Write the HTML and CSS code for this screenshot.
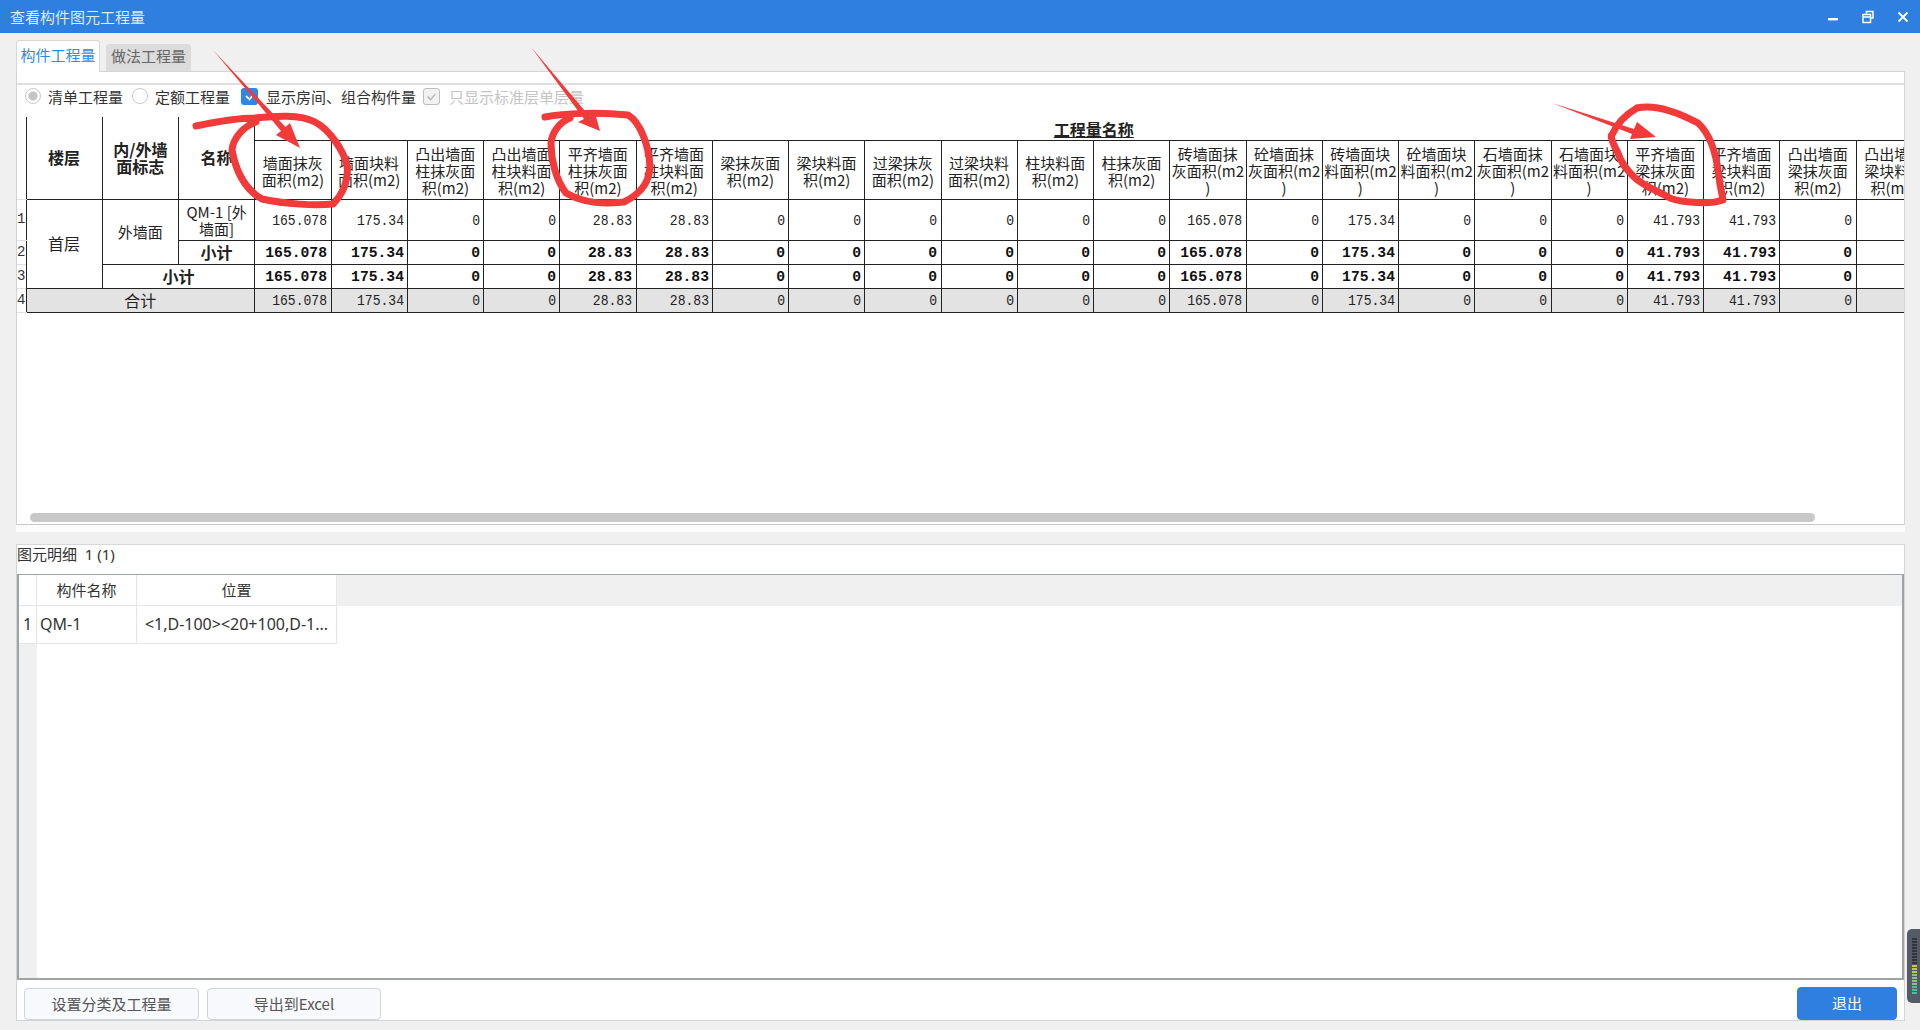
FILE: index.html
```html
<!DOCTYPE html>
<html lang="zh-CN">
<head>
<meta charset="utf-8">
<title>查看构件图元工程量</title>
<link rel="stylesheet" href="styles.css">
</head>
<body>
<header class="titlebar">
  <span class="title">查看构件图元工程量</span>
  <div class="winctl">
    <svg class="ico" viewBox="0 0 14 14"><rect x="2" y="8" width="10" height="2.4" fill="#fff"/></svg>
    <svg class="ico" viewBox="0 0 14 14"><path d="M5.5 3.5V1.5h6.5v6.5h-2.5M2 4.5h7.5v8H2zM2 7h7.5" fill="none" stroke="#fff" stroke-width="1.5"/></svg>
    <svg class="ico" viewBox="0 0 14 14"><path d="M2.5 2.5l9 9M11.5 2.5l-9 9" fill="none" stroke="#fff" stroke-width="1.8"/></svg>
  </div>
</header>

<div class="tabs">
  <div class="tab active">构件工程量</div>
  <div class="tab">做法工程量</div>
</div>

<main class="panel">
  <section class="upper">
    <div class="options">
      <label class="opt r1"><span class="radio"></span>清单工程量</label>
      <label class="opt r2"><span class="radio"></span>定额工程量</label>
      <label class="opt r3"><span class="check on"><svg viewBox="0 0 17 17"><path d="M5 8l3.5 3.5L12 7" fill="none" stroke="#fff" stroke-width="1.8"/></svg></span>显示房间、组合构件量</label>
      <label class="opt disabled"><span class="check off"><svg viewBox="0 0 17 17"><path d="M4 8.5l3.5 3.5L13 5.5" fill="none" stroke="#b5b5b5" stroke-width="1.6"/></svg></span>只显示标准层单层量</label>
    </div>
    <div class="grid-wrap">
      <table class="qty">
        <colgroup>
          <col class="c-no">
          <col class="c"><col class="c"><col class="c">
          <col class="c"><col class="c"><col class="c"><col class="c"><col class="c"><col class="c"><col class="c"><col class="c"><col class="c"><col class="c"><col class="c"><col class="c"><col class="c"><col class="c"><col class="c"><col class="c"><col class="c"><col class="c"><col class="c"><col class="c"><col class="c"><col class="c">
        </colgroup>
        <thead>
          <tr class="h1">
            <th class="no" rowspan="2"></th>
            <th class="lab" rowspan="2">楼层</th>
            <th class="lab" rowspan="2">内/外墙<br>面标志</th>
            <th class="lab" rowspan="2">名称</th>
            <th class="group" colspan="22">工程量名称</th>
          </tr>
          <tr class="h2">
            <th>墙面抹灰<br>面积(m2)</th>
            <th>墙面块料<br>面积(m2)</th>
            <th>凸出墙面<br>柱抹灰面<br>积(m2)</th>
            <th>凸出墙面<br>柱块料面<br>积(m2)</th>
            <th>平齐墙面<br>柱抹灰面<br>积(m2)</th>
            <th>平齐墙面<br>柱块料面<br>积(m2)</th>
            <th>梁抹灰面<br>积(m2)</th>
            <th>梁块料面<br>积(m2)</th>
            <th>过梁抹灰<br>面积(m2)</th>
            <th>过梁块料<br>面积(m2)</th>
            <th>柱块料面<br>积(m2)</th>
            <th>柱抹灰面<br>积(m2)</th>
            <th>砖墙面抹<br>灰面积(m2<br>)</th>
            <th>砼墙面抹<br>灰面积(m2<br>)</th>
            <th>砖墙面块<br>料面积(m2<br>)</th>
            <th>砼墙面块<br>料面积(m2<br>)</th>
            <th>石墙面抹<br>灰面积(m2<br>)</th>
            <th>石墙面块<br>料面积(m2<br>)</th>
            <th>平齐墙面<br>梁抹灰面<br>积(m2)</th>
            <th>平齐墙面<br>梁块料面<br>积(m2)</th>
            <th>凸出墙面<br>梁抹灰面<br>积(m2)</th>
            <th>凸出墙面<br>梁块料面<br>积(m2)</th>
          </tr>
        </thead>
        <tbody>
          <tr class="r-a">
            <td class="no">1</td>
            <td class="txt big" rowspan="3">首层</td>
            <td class="txt" rowspan="2">外墙面</td>
            <td class="txt">QM-1 [外<br>墙面]</td>
            <td class="n"><span>165.078</span></td><td class="n"><span>175.34</span></td><td class="n"><span>0</span></td><td class="n"><span>0</span></td><td class="n"><span>28.83</span></td><td class="n"><span>28.83</span></td><td class="n"><span>0</span></td><td class="n"><span>0</span></td><td class="n"><span>0</span></td><td class="n"><span>0</span></td><td class="n"><span>0</span></td><td class="n"><span>0</span></td><td class="n"><span>165.078</span></td><td class="n"><span>0</span></td><td class="n"><span>175.34</span></td><td class="n"><span>0</span></td><td class="n"><span>0</span></td><td class="n"><span>0</span></td><td class="n"><span>41.793</span></td><td class="n"><span>41.793</span></td><td class="n"><span>0</span></td><td class="n"></td>
          </tr>
          <tr class="r-b strong">
            <td class="no">2</td>
            <td class="txt big">小计</td>
            <td class="n"><span>165.078</span></td><td class="n"><span>175.34</span></td><td class="n"><span>0</span></td><td class="n"><span>0</span></td><td class="n"><span>28.83</span></td><td class="n"><span>28.83</span></td><td class="n"><span>0</span></td><td class="n"><span>0</span></td><td class="n"><span>0</span></td><td class="n"><span>0</span></td><td class="n"><span>0</span></td><td class="n"><span>0</span></td><td class="n"><span>165.078</span></td><td class="n"><span>0</span></td><td class="n"><span>175.34</span></td><td class="n"><span>0</span></td><td class="n"><span>0</span></td><td class="n"><span>0</span></td><td class="n"><span>41.793</span></td><td class="n"><span>41.793</span></td><td class="n"><span>0</span></td><td class="n"></td>
          </tr>
          <tr class="r-b strong">
            <td class="no">3</td>
            <td class="txt big" colspan="2">小计</td>
            <td class="n"><span>165.078</span></td><td class="n"><span>175.34</span></td><td class="n"><span>0</span></td><td class="n"><span>0</span></td><td class="n"><span>28.83</span></td><td class="n"><span>28.83</span></td><td class="n"><span>0</span></td><td class="n"><span>0</span></td><td class="n"><span>0</span></td><td class="n"><span>0</span></td><td class="n"><span>0</span></td><td class="n"><span>0</span></td><td class="n"><span>165.078</span></td><td class="n"><span>0</span></td><td class="n"><span>175.34</span></td><td class="n"><span>0</span></td><td class="n"><span>0</span></td><td class="n"><span>0</span></td><td class="n"><span>41.793</span></td><td class="n"><span>41.793</span></td><td class="n"><span>0</span></td><td class="n"></td>
          </tr>
          <tr class="r-b total">
            <td class="no">4</td>
            <td class="txt big" colspan="3">合计</td>
            <td class="n"><span>165.078</span></td><td class="n"><span>175.34</span></td><td class="n"><span>0</span></td><td class="n"><span>0</span></td><td class="n"><span>28.83</span></td><td class="n"><span>28.83</span></td><td class="n"><span>0</span></td><td class="n"><span>0</span></td><td class="n"><span>0</span></td><td class="n"><span>0</span></td><td class="n"><span>0</span></td><td class="n"><span>0</span></td><td class="n"><span>165.078</span></td><td class="n"><span>0</span></td><td class="n"><span>175.34</span></td><td class="n"><span>0</span></td><td class="n"><span>0</span></td><td class="n"><span>0</span></td><td class="n"><span>41.793</span></td><td class="n"><span>41.793</span></td><td class="n"><span>0</span></td><td class="n"></td>
          </tr>
        </tbody>
      </table>
    </div>
    <div class="hscroll"><div class="thumb"></div></div>
  </section>

  <div class="splitter"></div>

  <section class="lower">
    <div class="caption">图元明细&nbsp;&nbsp;1 (1)</div>
    <div class="detail">
      <div class="d-row d-head">
        <div class="d-no"></div>
        <div class="d-name">构件名称</div>
        <div class="d-pos">位置</div>
      </div>
      <div class="d-row d-item">
        <div class="d-no">1</div>
        <div class="d-name left">QM-1</div>
        <div class="d-pos">&lt;1,D-100&gt;&lt;20+100,D-1...</div>
      </div>
      <div class="d-fill"><div class="d-gutter"></div></div>
    </div>
    <footer class="actions">
      <button class="btn wide">设置分类及工程量</button>
      <button class="btn wide">导出到Excel</button>
      <button class="btn primary">退出</button>
    </footer>
  </section>
</main>

<div class="gadget"><div class="leds"></div></div>

<svg class="marks" viewBox="0 0 1920 1030" width="1920" height="1030">
  <g fill="#f23a3a">
    <polygon points="213,50 285.5,127 290,123 300,148 276,135 281,131"/>
    <polygon points="531,47 590,117 595,113 600,131 578,122 584,119"/>
    <polygon points="1552,103 1634,129 1637,122 1656,137 1630,139 1632,134"/>
  </g>
  <g fill="none" stroke="#f23a3a" stroke-width="7" stroke-linecap="round" stroke-linejoin="round">
    <path d="M196 126C215 122 235 118 255 118C275 116 300 114 315 122C330 130 343 150 347 165C349 180 343 194 333 204C315 206 285 204 262 199C246 190 236 172 232 150C233 138 244 126 256 122"/>
    <path d="M545 117C565 113 600 112 628 115C640 122 649 145 650 167C649 180 644 192 624 202C605 204 585 204 566 193C556 180 551 160 551 143C552 132 560 122 570 118"/>
    <path d="M1637 108C1650 105 1670 108 1698 123C1708 132 1716 150 1719 177C1720 187 1722 193 1723 200C1712 204 1700 203 1690 202C1680 201 1672 200 1668 197C1655 190 1642 185 1634 177C1625 168 1620 160 1618 153C1612 142 1610 135 1612 135C1616 125 1625 115 1637 108"/>
  </g>
</svg>
</body>
</html>
```

FILE: styles.css
```css
* { box-sizing: border-box; }
html, body { margin: 0; height: 100%; }
body {
  width: 1920px;
  height: 1030px;
  overflow: hidden;
  position: relative;
  background: #f0f0f0;
  font-family: "Noto Sans CJK SC", "Noto Sans", sans-serif;
  font-size: 15px;
  color: #333;
  display: flex;
  flex-direction: column;
}

/* title bar */
.titlebar {
  height: 33px;
  flex: none;
  background: #2e7fe0;
  color: #dcebfb;
  display: flex;
  align-items: center;
  justify-content: space-between;
  padding: 0 10px;
}
.winctl { display: flex; gap: 21px; align-items: center; }
.ico { width: 14px; height: 14px; display: block; }

/* tabs */
.tabs {
  height: 38px;
  flex: none;
  padding: 6px 0 0 16px;
  display: flex;
  align-items: flex-end;
  gap: 6px;
}
.tab {
  width: 85px;
  height: 27px;
  background: #dcdcdc;
  color: #666;
  text-align: center;
  line-height: 23px;
  border-radius: 3px 3px 0 0;
}
.tab.active {
  width: 84px;
  height: 32px;
  line-height: 28px;
  background: #fff;
  color: #2e8be8;
  border: 1px solid #d8d8d8;
  border-bottom: 0;
  margin-bottom: -1px;
  position: relative;
  z-index: 1;
}

/* main panel */
.panel {
  margin: 0 15px 0 16px;
  height: 950px;
  flex: none;
  display: flex;
  flex-direction: column;
  border: 1px solid #d4d4d4;
  padding-top: 11px;
  background: #fff;
}
.upper {
  height: 442px;
  flex: none;
  display: flex;
  flex-direction: column;
  background: #fff;
  border-top: 2px solid #dedede;
  border-bottom: 1px solid #c8c8c8;
}
.options {
  height: 32px;
  flex: none;
  display: flex;
  align-items: center;
  padding: 0 0 10px 8px;
}
.opt { display: flex; align-items: center; gap: 7px; color: #333; }
.opt.r1 { margin-right: 9px; }
.opt.r2 { margin-right: 11px; }
.opt.r3 { margin-right: 7px; gap: 8px; }
.opt.disabled { color: #c4c4c4; gap: 9px; }
.radio {
  width: 16px;
  height: 16px;
  border: 1px solid #c8c8c8;
  border-radius: 50%;
  background: #fff;
}
.r1 .radio { background: radial-gradient(circle, #c4c4c4 0 4px, #fff 5px); }
.check { width: 17px; height: 17px; border-radius: 3px; display: block; }
.check svg { display: block; width: 100%; height: 100%; }
.check.on { background: #2e86e6; }
.check.off { background: #f2f2f2; border: 1px solid #bdbdbd; }

.grid-wrap {
  height: 396px;
  flex: none;
  overflow: hidden;
}
.qty {
  table-layout: fixed;
  border-collapse: collapse;
  width: 1915.25px;
  color: #222;
  font-size: 15px;
  line-height: 17px;
}
.c-no { width: 9px; }
.c { width: 76.25px; }
.qty th, .qty td {
  padding: 0;
  overflow: hidden;
  white-space: nowrap;
  border: 1px solid #222;
}
.qty th { font-weight: 400; text-align: center; background: #fff; }
.h1 { height: 23px; }
.h2 { height: 59px; }
.h2 th { padding-top: 2px; }
.r-a { height: 41px; }
.r-b { height: 24px; }
.r-b .txt { padding-top: 1px; }
.qty .lab { font-weight: 700; font-size: 16px; border-top: 0; }
.qty .group {
  font-weight: 700;
  font-size: 16px;
  border-top: 0;
  border-right: 0;
  text-decoration: underline;
  text-decoration-thickness: 1px;
  vertical-align: bottom;
  line-height: 21px;
}
.qty .no {
  border-top: 0;
  border-bottom: 1px solid #e0e0e0;
  border-left: 0;
  background: #fff;
  color: #333;
  text-align: left;
  font-family: "Liberation Mono", monospace;
  font-size: 14px;
}
.qty .txt { text-align: center; font-weight: 400; }
.qty .txt.big { font-size: 16px; }
.strong .txt { font-weight: 700; }
.qty .n {
  text-align: right;
  padding: 2px 3px 0 0;
  font-family: "Liberation Mono", monospace;
  font-size: 15px;
  line-height: 17px;
}
.r-a .n { padding-top: 4px; }
.n span { display: inline-block; transform: scaleX(.87); transform-origin: 100% 50%; }
.strong .n { font-weight: 700; color: #111; }
.strong .n span { transform: scaleX(.98); }
.total td { background: #e3e3e3; }
.total .no { background: #fff; }

.hscroll {
  height: 9px;
  flex: none;
  padding-left: 13px;
}
.thumb { width: 1785px; height: 9px; border-radius: 5px; background: #c8c8c8; }

.splitter {
  height: 19px;
  flex: none;
  background: linear-gradient(#fbfbfb 0 7px, #f0f0f0 7px);
  margin: 0 -1px;
}

/* lower */
.lower {
  flex: 1;
  min-height: 0;
  display: flex;
  flex-direction: column;
  background: #fff;
  border-top: 1px solid #d8d8d8;
}
.caption {
  height: 29px;
  flex: none;
  line-height: 18px;
  color: #333;
  font-family: "Noto Sans", "Noto Sans CJK SC", sans-serif;
}
.detail {
  height: 406px;
  flex: none;
  border: 2px solid #9ea3a8;
  border-top-width: 1px;
  display: flex;
  flex-direction: column;
  color: #333;
  font-family: "Noto Sans", "Noto Sans CJK SC", sans-serif;
}
.d-row { display: flex; flex: none; }
.d-head { height: 31px; background: #f0f0f0; line-height: 30px; }
.d-item { height: 38px; line-height: 36px; font-size: 16px; }
.d-no { width: 18px; background: #fff; text-align: center; border: solid #e6e6e6; border-width: 0 1px 1px 0; }
.d-name { width: 100px; background: #fff; text-align: center; border: solid #e6e6e6; border-width: 0 1px 1px 0; }
.d-name.left { text-align: left; padding-left: 3px; }
.d-pos { width: 200px; background: #fff; text-align: center; border: solid #e6e6e6; border-width: 0 1px 1px 0; white-space: nowrap; overflow: hidden; }
.d-fill { flex: 1; display: flex; min-height: 0; }
.d-gutter { width: 18px; background: #f0f0f0; }

.actions {
  flex: 1;
  min-height: 0;
  display: flex;
  align-items: flex-end;
  padding: 0 7px 0 7px;
  gap: 8px;
}
.btn {
  font: inherit;
  height: 32px;
  color: #555;
  background: #f7f9fc;
  border: 1px solid #cdd5df;
  border-radius: 4px;
  padding: 0 0 2px;
}
.btn.wide:nth-child(1) { width: 175px; }
.btn.wide:nth-child(2) { width: 174px; }
.btn.primary {
  width: 100px;
  height: 33px;
  margin-left: auto;
  background: #2e7fe0;
  border-color: #2e7fe0;
  color: #fff;
}

/* overlays */
.gadget {
  position: absolute;
  left: 1907px;
  top: 929px;
  width: 13px;
  height: 74px;
  background: #555b66;
  border-radius: 5px 0 0 5px;
  padding: 8px 0 0 5px;
}
.leds {
  width: 5px;
  height: 58px;
  background:
    repeating-linear-gradient(#555b66 0 1px, transparent 1px 3px),
    linear-gradient(#30343b 0 48%, #c6c84c 48% 62%, #86c878 62% 85%, #46c0a0 85%);
}
.marks { position: absolute; left: 0; top: 0; pointer-events: none; }
```
